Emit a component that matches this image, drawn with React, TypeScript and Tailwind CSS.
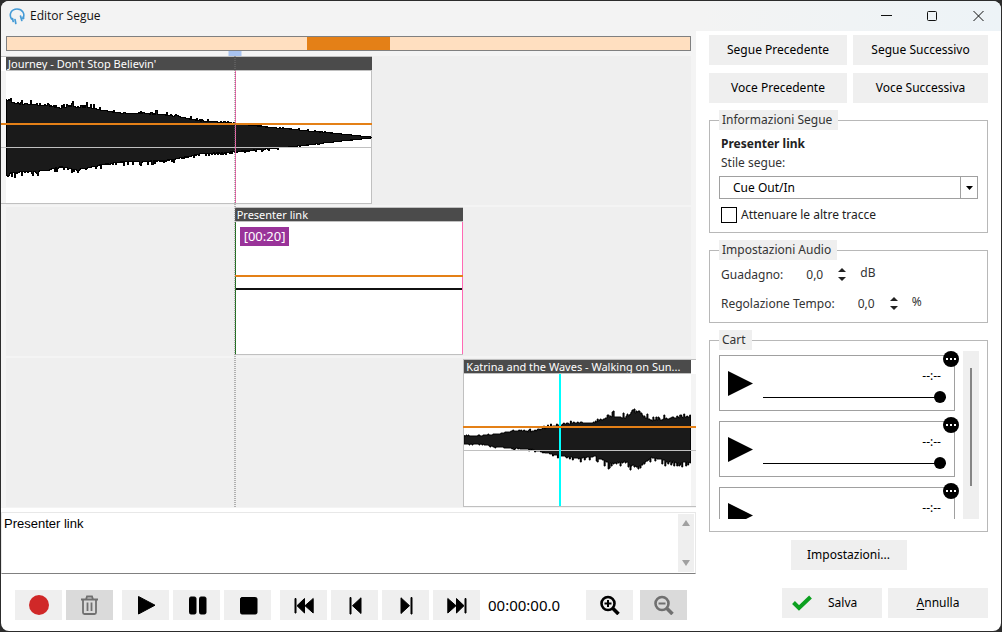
import type { ReactNode } from 'react';

type Point = [x: number, top: number, bottom: number];

interface Clip {
  title: string;
  start: number;
  end: number;
}

const TIMELINE_LENGTH = 696;

const clips: Record<'journey' | 'presenter' | 'katrina', Clip> = {
  journey: { title: "Journey - Don't Stop Believin'", start: 0, end: 372 },
  presenter: { title: 'Presenter link', start: 234, end: 463 },
  katrina: { title: 'Katrina and the Waves - Walking on Sun...', start: 463, end: 696 },
};

const journeyEnvelope: Point[] = [
  [0, 28, 105], [4, 30, 102], [14, 32, 101], [37, 33, 100], [54, 36, 96], [64, 34, 98], [70, 35, 99],
  [81, 35, 97], [94, 38, 94], [114, 41, 91], [154, 42, 90], [174, 45, 87], [194, 49, 83],
  [227, 51, 81], [261, 55, 78], [294, 58, 75], [327, 61, 71], [366, 65, 67],
];

const katrinaEnvelope: Point[] = [
  [0, 61, 71], [18, 61, 71], [35, 59, 74], [52, 56, 75], [67, 57, 76], [80, 54, 79], [96, 50, 82],
  [112, 48, 85], [132, 48, 83], [146, 42, 90], [162, 43, 88], [168, 39, 91], [175, 37, 94],
  [180, 42, 90], [188, 46, 84], [206, 44, 88], [228, 42, 89],
];

function noise(i: number) {
  const n = Math.sin(i * 127.1) * 43758.5453;
  return n - Math.floor(n);
}

function wavePath(points: Point[], roughness: number) {
  const last = points[points.length - 1][0];
  const top: string[] = [];
  const bottom: string[] = [];
  for (let x = 0; x < last; x++) {
    const k = points.findIndex((p) => p[0] > x);
    const a = points[k - 1];
    const b = points[k];
    const t = (x - a[0]) / (b[0] - a[0]);
    const hi = a[1] + (b[1] - a[1]) * t;
    const lo = a[2] + (b[2] - a[2]) * t;
    const spike = (lo - hi) * roughness;
    const up = Math.round(hi + 0.8 - Math.pow(noise(x), 5) * spike);
    const down = Math.round(lo - 0.8 + Math.pow(noise(x + 900), 5) * spike);
    top.push(`L${x} ${up}H${x + 1}`);
    bottom.unshift(`L${x + 1} ${down}H${x}`);
  }
  return `M0 ${points[0][1]}${top.join('')}${bottom.join('')}Z`;
}

function Waveform({ points, roughness, className }: { points: Point[]; roughness: number; className: string }) {
  const width = points[points.length - 1][0];
  return (
    <svg
      className={`absolute top-0 h-[134px] ${className}`}
      viewBox={`0 0 ${width} 134`}
      preserveAspectRatio="none"
      shapeRendering="crispEdges"
      aria-hidden="true"
    >
      <path d={wavePath(points, roughness)} fill="#1a1a1a" stroke="#000" strokeWidth="1" />
    </svg>
  );
}

function Track({ clip, className = '', inset = '', children }: { clip: Clip; className?: string; inset?: string; children: ReactNode }) {
  return (
    <div className="relative flex h-[149px] before:absolute before:inset-x-[5px] before:inset-y-0 before:bg-[#efefef]">
      <section
        aria-label={clip.title}
        className={`relative flex min-w-0 flex-col border-y border-[#c0c0c0] bg-white ${className}`}
        style={{
          marginLeft: `${(clip.start / TIMELINE_LENGTH) * 100}%`,
          width: `${((clip.end - clip.start) / TIMELINE_LENGTH) * 100}%`,
        }}
      >
        <h2 className={`h-[14px] truncate border-b border-[#c0c0c0] bg-[#4b4b4b] pl-[2px] text-[11px] leading-[13px] text-white ${inset}`}>
          {clip.title}
        </h2>
        <div className="relative flex-1">{children}</div>
      </section>
    </div>
  );
}

function GainLine({ className }: { className: string }) {
  return <div className={`absolute inset-x-0 h-[2px] bg-[#e48017] ${className}`} />;
}

function Group({ title, className = '', children }: { title: string; className?: string; children: ReactNode }) {
  return (
    <section aria-label={title} className={`border border-[#b8b8b8] px-[9px] ${className}`}>
      <h2 className="-mt-[11px] w-fit bg-[#efefef] pl-[3px] pr-[6px] leading-5 text-[#333]">{title}</h2>
      {children}
    </section>
  );
}

function ToolButton({ label, className = '', disabled, children }: { label: string; className?: string; disabled?: boolean; children: ReactNode }) {
  return (
    <button
      type="button"
      aria-label={label}
      disabled={disabled}
      className={`flex h-[30px] w-[47px] items-center justify-center ${disabled ? 'bg-[#dadada] text-[#707070]' : 'bg-[#efefef] text-black'} ${className}`}
    >
      {children}
    </button>
  );
}

function Icon({ children }: { children: ReactNode }) {
  return (
    <svg width="21" height="20" viewBox="0 0 21 20" fill="currentColor" stroke="currentColor" strokeLinejoin="round" aria-hidden="true">
      {children}
    </svg>
  );
}

function ZoomIcon({ sign }: { sign: string }) {
  return (
    <svg width="21" height="20" viewBox="0 0 21 20" fill="none" stroke="currentColor" aria-hidden="true">
      <circle cx="9" cy="8.500" r="6.500" strokeWidth="2.600" />
      <path d="M13.500 13L19.500 19" strokeWidth="3.600" />
      <path d={sign} strokeWidth="2" />
    </svg>
  );
}

function TextButton({ className = '', children }: { className?: string; children: ReactNode }) {
  return (
    <button type="button" className={`h-[30px] bg-[#efefef] text-center ${className}`}>
      {children}
    </button>
  );
}

function Spinner({ id, label, unit }: { id: string; label: string; unit: string }) {
  return (
    <div className="flex h-[29px] items-center pl-[2px] text-[#333]">
      <label htmlFor={id}>{label}</label>
      <input id={id} defaultValue="0,0" className="ml-[23px] w-[20px] bg-transparent outline-none" />
      <div className="ml-3 flex flex-col gap-[5px]">
        <button type="button" aria-label={`${label} +`}>
          <svg width="8" height="4" viewBox="0 0 8 4" aria-hidden="true"><path d="M0 4L4 0L8 4Z" fill="#222" /></svg>
        </button>
        <button type="button" aria-label={`${label} -`}>
          <svg width="8" height="4" viewBox="0 0 8 4" aria-hidden="true"><path d="M0 0L4 4L8 0Z" fill="#222" /></svg>
        </button>
      </div>
      <span className="ml-[14px] pb-[3px]">{unit}</span>
    </div>
  );
}

function CartSlot({ index }: { index: number }) {
  return (
    <div className="relative mr-2 flex h-[56px] shrink-0 items-center border border-[#a0a0a0] pl-2">
      <button type="button" aria-label={`Play ${index}`}>
        <svg width="25" height="25" viewBox="0 0 25 25" aria-hidden="true"><path d="M0 0L25 12.500L0 25Z" /></svg>
      </button>
      <div className="ml-[10px] mr-2 flex flex-1 flex-col self-start pt-3">
        <span className="pr-[5px] text-right leading-4 text-black">--:--</span>
        <input
          type="range"
          aria-label={`Volume ${index}`}
          defaultValue={100}
          className="mt-[7px] h-[12px] w-full appearance-none bg-[linear-gradient(#000,#000)] bg-[length:100%_1px] bg-center bg-no-repeat [&::-webkit-slider-thumb]:size-3 [&::-webkit-slider-thumb]:appearance-none [&::-webkit-slider-thumb]:rounded-full [&::-webkit-slider-thumb]:bg-black"
        />
      </div>
      <button type="button" aria-label={`Menu ${index}`} className="absolute -right-[5px] -top-[5px] flex size-4 items-center justify-center gap-[2px] rounded-full bg-black">
        <i className="size-[2px] bg-white" />
        <i className="size-[2px] bg-white" />
        <i className="size-[2px] bg-white" />
      </button>
    </div>
  );
}

function TitleBar() {
  return (
    <header className="flex h-[30px] items-center bg-[linear-gradient(90deg,#f3f3f3_70%,#edf3f7)] pl-2 text-[#111]">
      <svg width="16" height="17" viewBox="0 0 16 17" fill="none" stroke="#459bd6" strokeLinecap="round" aria-hidden="true">
        <path d="M2.500 11C-0.500 6 2.500 1 8 1C13.500 1 16.500 6 13.800 10.500" strokeWidth="1.600" />
        <path d="M3.500 10.500L4.200 13.500M6 11.500L6.800 15.500M11.500 8L12.800 12.500M14.300 9L14.600 10.500" strokeWidth="1.700" />
      </svg>
      <h1 className="ml-[5px] flex-1 font-['Open_Sans',sans-serif]">Editor Segue</h1>
      <div className="flex">
        <button type="button" aria-label="Minimize" className="flex w-[46px] justify-center">
          <svg width="11" height="11" viewBox="0 0 11 11" stroke="#111" aria-hidden="true"><path d="M0 4.500H11" /></svg>
        </button>
        <button type="button" aria-label="Maximize" className="flex w-[46px] justify-center">
          <svg width="11" height="11" viewBox="0 0 11 11" fill="none" stroke="#111" aria-hidden="true"><rect x="0.500" y="0.500" width="9" height="9" rx="1" /></svg>
        </button>
        <button type="button" aria-label="Close" className="flex w-[46px] justify-center">
          <svg width="11" height="11" viewBox="0 0 11 11" stroke="#111" aria-hidden="true"><path d="M0.500 0L10.500 10M10.500 0L0.500 10" /></svg>
        </button>
      </div>
    </header>
  );
}

function Timeline() {
  return (
    <div className="bg-[#f4f4f4] pb-px pt-[5px]">
      <div className="mx-[5px] flex h-[15px] border border-[#808080] bg-[#ffdfc0]">
        <div className="ml-[43.900%] w-[12.200%] bg-[#e48017]" />
      </div>
      <div className="relative pt-[5px]">
        <div className="flex flex-col gap-[2px]">
          <Track clip={clips.journey} className="mb-px" inset="ml-[5px]">
            <div className="absolute inset-y-0 left-0 w-[5px] bg-[#f4f4f4]" />
            <div className="absolute inset-y-0 right-0 w-px bg-[#c0c0c0]" />
            <Waveform points={journeyEnvelope} roughness={0.08} className="left-[5px] w-[calc(100%-5px)]" />
            <div className="absolute inset-x-0 top-[76px] h-px bg-[#c0c0c0]" />
            <div className="absolute inset-y-0 left-[63%] w-px bg-[#ff69b4]" />
            <GainLine className="top-[52px]" />
          </Track>
          <Track clip={clips.presenter} className="mb-px">
            <div className="absolute inset-y-0 left-0 w-px bg-[#107010]" />
            <span className="absolute left-[5px] top-[5px] bg-[#993399] px-1 text-[13px] leading-[19px] text-white">[00:20]</span>
            <div className="absolute inset-x-px top-[66px] h-[2px] bg-[#111]" />
            <div className="absolute inset-y-0 right-0 w-px bg-[#ff69b4]" />
            <GainLine className="top-[53px]" />
          </Track>
          <Track clip={clips.katrina} className="mt-px" inset="mr-[5px] border-l">
            <div className="absolute inset-y-0 left-0 w-px bg-[#c0c0c0]" />
            <div className="absolute inset-y-0 right-0 w-[5px] bg-[#f4f4f4]" />
            <Waveform points={katrinaEnvelope} roughness={0.13} className="left-px w-[calc(100%-6px)]" />
            <div className="absolute inset-x-0 top-[76px] h-px bg-[#c0c0c0]" />
            <div className="absolute inset-y-0 left-[41%] w-[2px] bg-[#00ffff]" />
            <GainLine className="top-[52px]" />
          </Track>
        </div>
        <div className="absolute left-[33.600%] top-0 flex h-full w-[13px] -translate-x-1/2 flex-col items-center">
          <div className="h-[5px] w-full bg-[#a8c3f0]" />
          <div className="w-px flex-1 border-l border-dotted border-[#707070]" />
        </div>
      </div>
    </div>
  );
}

function Transport() {
  return (
    <div className="flex items-center gap-1 pl-[14px] pr-2 pt-4">
      <ToolButton label="Record">
        <span className="size-5 rounded-full bg-[#d02828]" />
      </ToolButton>
      <ToolButton label="Delete" disabled>
        <svg width="19" height="20" viewBox="0 0 19 20" fill="none" stroke="currentColor" strokeWidth="1.800" aria-hidden="true">
          <path d="M1 4.500H18M6 4.500L7 1.500H12L13 4.500M3 4.500V17.500Q3 19 4.500 19H14.500Q16 19 16 17.500V4.500M7.500 7.500V16M11.500 7.500V16" />
        </svg>
      </ToolButton>
      <ToolButton label="Play" className="ml-[5px]">
        <Icon><path d="M3.500 1.500L20 10.200L3.500 19Z" /></Icon>
      </ToolButton>
      <ToolButton label="Pause">
        <Icon>
          <rect x="3.500" y="2" width="6.500" height="17" rx="1.500" />
          <rect x="13.500" y="2" width="6.500" height="17" rx="1.500" />
        </Icon>
      </ToolButton>
      <ToolButton label="Stop">
        <Icon><rect x="3.500" y="2.500" width="16.500" height="16.500" rx="1.500" /></Icon>
      </ToolButton>
      <ToolButton label="First segue" className="ml-[5px]">
        <Icon><path d="M2 3.500H3V18H2ZM11.500 3.500V18L4 10.700ZM20.200 3.500V18L12 10.700Z" /></Icon>
      </ToolButton>
      <ToolButton label="Previous">
        <Icon><path d="M6 2.500H7V19H6ZM17 2.800V18.500L8.500 10.700Z" /></Icon>
      </ToolButton>
      <ToolButton label="Next">
        <Icon><path d="M17 2.500H16V19H17ZM6 2.800V18.500L14.500 10.700Z" /></Icon>
      </ToolButton>
      <ToolButton label="Last segue">
        <Icon><path d="M20 3.500H19V18H20ZM10.500 3.500V18L18 10.700ZM1.800 3.500V18L10 10.700Z" /></Icon>
      </ToolButton>
      <time className="ml-1 w-[94px] text-[15px] text-black">00:00:00.0</time>
      <ToolButton label="Zoom in">
        <ZoomIcon sign="M5.500 8.500H12.500M9 5V12" />
      </ToolButton>
      <ToolButton label="Zoom out" className="ml-[3px]" disabled>
        <ZoomIcon sign="M5.500 8.500H12.500" />
      </ToolButton>
    </div>
  );
}

function Sidebar() {
  return (
    <aside className="flex w-[279px] shrink-0 flex-col pt-1">
      <div className="grid grid-cols-[138px_135px] justify-between gap-y-2">
        <TextButton>Segue Precedente</TextButton>
        <TextButton>Segue Successivo</TextButton>
        <TextButton>Voce Precedente</TextButton>
        <TextButton>Voce Successiva</TextButton>
      </div>

      <Group title="Informazioni Segue" className="mt-[17px] pb-[7px]">
        <div className="mt-1 flex flex-col pl-[2px] text-[#222]">
          <strong className="leading-[20px]">Presenter link</strong>
          <label htmlFor="style" className="leading-[17px] text-[#333]">Stile segue:</label>
        </div>
        <div className="relative mt-[5px]">
          <select id="style" className="block h-[23px] w-full appearance-none border border-[#a0a0a0] pl-[13px] text-black">
            <option>Cue Out/In</option>
          </select>
          <div className="pointer-events-none absolute inset-y-0 right-0 flex w-[18px] items-center justify-center border-l border-[#a0a0a0]">
            <svg width="7" height="4" viewBox="0 0 7 4" aria-hidden="true"><path d="M0 0H7L3.500 4Z" /></svg>
          </div>
        </div>
        <label className="mt-[6px] flex items-center gap-1 pl-[2px] leading-5 text-[#222]">
          <input type="checkbox" className="size-4 appearance-none border border-black bg-white" />
          Attenuare le altre tracce
        </label>
      </Group>

      <Group title="Impostazioni Audio" className="mt-[17px] pb-1">
        <Spinner id="gain" label="Guadagno:" unit="dB" />
        <Spinner id="tempo" label="Regolazione Tempo:" unit="%" />
      </Group>

      <Group title="Cart" className="mt-[17px] h-[192px]">
        <div className="mt-px flex h-[168px]">
          <div className="flex flex-1 flex-col gap-[10px] overflow-hidden pt-[4px]">
            <CartSlot index={1} />
            <CartSlot index={2} />
            <CartSlot index={3} />
          </div>
          <div className="-mr-px flex w-4 justify-center bg-[#efefef] pt-[17px]">
            <div className="h-[118px] w-[2px] bg-[#858585]" />
          </div>
        </div>
      </Group>

      <TextButton className="mt-2 w-[116px] self-center">Impostazioni...</TextButton>
      <div className="mt-[18px] flex justify-end gap-[6px]">
        <TextButton className="flex w-[100px] items-center gap-4 pl-[10px]">
          <svg width="20" height="16" viewBox="0 0 20 16" fill="none" stroke="#0ca020" strokeWidth="4" aria-hidden="true"><path d="M1.500 7.500L7 13L18.500 2" /></svg>
          Salva
        </TextButton>
        <TextButton className="w-[100px]"><u className="underline-offset-2">A</u>nnulla</TextButton>
      </div>
    </aside>
  );
}

export default function App() {
  return (
    <div className="min-h-screen bg-[#2c2c2c] p-px font-['Noto_Sans','Open_Sans',sans-serif] text-[12px] text-black">
      <main className="min-h-[630px] overflow-hidden rounded-lg bg-white">
        <TitleBar />
        <div className="flex gap-[13px] pr-[13px]">
          <div className="min-w-0 flex-1">
            <Timeline />
            <div className="mt-[4px] flex h-[62px] border border-b-[#808080] border-[#e8e8e8] p-px">
              <textarea
                aria-label="Script"
                defaultValue="Presenter link"
                className="min-w-0 flex-1 resize-none pl-px pt-[2px] font-['Liberation_Sans',sans-serif] text-[13px] leading-4 outline-none"
              />
              <div className="flex w-4 flex-col items-center justify-between bg-[#efefef] py-[6px]">
                <svg width="8" height="6" viewBox="0 0 8 6" fill="#a0a0a0" aria-hidden="true"><path d="M4 0L8 6H0Z" /></svg>
                <svg width="8" height="6" viewBox="0 0 8 6" fill="#a0a0a0" aria-hidden="true"><path d="M4 6L8 0H0Z" /></svg>
              </div>
            </div>
            <Transport />
          </div>
          <Sidebar />
        </div>
      </main>
    </div>
  );
}
